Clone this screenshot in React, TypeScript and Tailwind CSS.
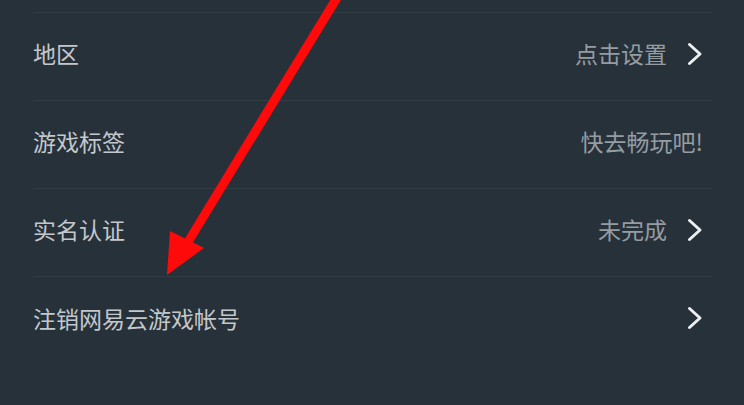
interface Row {
  label: string
  value?: string
  arrow: boolean
}

const rows: Row[] = [
  { label: '地区', value: '点击设置', arrow: true },
  { label: '游戏标签', value: '快去畅玩吧!', arrow: false },
  { label: '实名认证', value: '未完成', arrow: true },
  { label: '注销网易云游戏帐号', arrow: true },
]

function Chevron() {
  return (
    <svg className="ml-[20px] h-[24px] w-[16px]" viewBox="0 0 16 24" fill="none">
      <polyline
        points="2.5,2.5 13,12 2.5,21.5"
        stroke="#eef0f2"
        strokeWidth="3"
        strokeLinecap="round"
        strokeLinejoin="round"
      />
    </svg>
  )
}

export default function App() {
  return (
    <div
      className="relative h-[405px] w-[744px] overflow-hidden bg-[#27313a]"
      style={{ fontFamily: '"Noto Sans CJK SC", "Noto Sans", sans-serif' }}
    >
      <div className="ml-[33px] mr-[32px]">
        <div className="h-[13px] border-b border-[#323c45]" />
        {rows.map((row, i) => (
          <div
            key={row.label}
            className={`flex h-[88px] items-center justify-between pr-[9px] pb-[6px] ${
              i < rows.length - 1 ? 'border-b border-[#323c45]' : ''
            }`}
          >
            <span className="text-[23px] leading-none text-[#c3c8cc]">{row.label}</span>
            <div className="flex items-center">
              {row.value ? (
                <span className="text-[23px] leading-none text-[#959ca2]">{row.value}</span>
              ) : null}
              {row.arrow ? <Chevron /> : null}
            </div>
          </div>
        ))}
      </div>

      {/* red annotation arrow */}
      <svg className="pointer-events-none absolute inset-0" width="744" height="405">
        <line x1="338" y1="-4" x2="188" y2="242" stroke="#ff0a0a" strokeWidth="9" />
        <polygon points="167,275 170,231 204,248" fill="#ff0a0a" />
      </svg>
    </div>
  )
}
